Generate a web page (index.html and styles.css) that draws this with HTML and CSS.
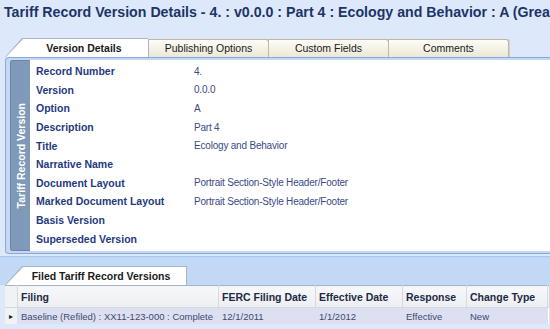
FILE: index.html
```html
<!DOCTYPE html>
<html lang="en">

<head>
    <meta charset="UTF-8" />
    <link rel="stylesheet" href="styles.css">
    <title>Tariff Record Version Details</title>
</head>

<body>
    <h1 class="title">Tariff Record Version Details - 4. : v0.0.0 : Part 4 : Ecology and Behavior : A (Great W</h1>

    <div class="tabs">
        <div class="tab active"><span>Version Details</span></div>
        <div class="tab">Publishing Options</div>
        <div class="tab">Custom Fields</div>
        <div class="tab">Comments</div>
    </div>

    <div class="panel">
        <div class="side"><span>Tariff Record Version</span></div>
        <div class="fields">
            <div class="row"><label>Record Number</label><span>4.</span></div>
            <div class="row"><label>Version</label><span>0.0.0</span></div>
            <div class="row"><label>Option</label><span>A</span></div>
            <div class="row"><label>Description</label><span>Part 4</span></div>
            <div class="row"><label>Title</label><span>Ecology and Behavior</span></div>
            <div class="row"><label>Narrative Name</label><span></span></div>
            <div class="row"><label>Document Layout</label><span>Portrait Section-Style Header/Footer</span></div>
            <div class="row"><label>Marked Document Layout</label><span>Portrait Section-Style Header/Footer</span></div>
            <div class="row"><label>Basis Version</label><span></span></div>
            <div class="row"><label>Superseded Version</label><span></span></div>
        </div>
    </div>

    <div class="band">
        <div class="subtab"><span>Filed Tariff Record Versions</span></div>
    </div>

    <table class="grid">
        <thead>
            <tr>
                <th class="ind"></th>
                <th class="c-filing">Filing</th>
                <th class="c-ferc">FERC Filing Date</th>
                <th class="c-eff">Effective Date</th>
                <th class="c-resp">Response</th>
                <th class="c-type">Change Type</th>
                <th></th>
            </tr>
        </thead>
        <tbody>
            <tr class="sel">
                <td class="ind">&#9656;</td>
                <td>Baseline (Refiled) : XX11-123-000 : Complete</td>
                <td>12/1/2011</td>
                <td>1/1/2012</td>
                <td>Effective</td>
                <td>New</td>
                <td class="blank"></td>
            </tr>
        </tbody>
    </table>
</body>

</html>
```

FILE: styles.css
```css
body {
    margin: 0;
    width: 550px;
    height: 329px;
    overflow: hidden;
    background: #dde9fb;
    font-family: "Liberation Sans", Arial, sans-serif;
}

.title {
    margin: 0;
    padding: 4px 0 0 4px;
    height: 30px;
    box-sizing: border-box;
    font-size: 14.2px;
    font-weight: bold;
    color: #1c3466;
    white-space: nowrap;
}

/* tab strip */
.tabs {
    display: flex;
    height: 21px;
    margin-top: 6px;
    padding-left: 5px;
    align-items: flex-end;
}

.tab {
    width: 121px;
    height: 18px;
    box-sizing: border-box;
    border: 1px solid #bdb8a3;
    border-bottom: none;
    border-radius: 0 3px 0 0;
    background: linear-gradient(#fdfcf6, #ece8d6);
    box-shadow: 1px 0 0 #d6d2c0;
    font-size: 10.5px;
    color: #1a1a1a;
    text-align: center;
    line-height: 17px;
}

.tab + .tab {
    margin-left: -1px;
}

.tab.active {
    width: 144px;
    height: 19px;
    border: none;
    background: #a9b4c6;
    clip-path: polygon(17px 0, 100% 0, 100% 100%, 0 100%);
    padding: 1px 1px 0 1px;
    box-shadow: none;
    position: relative;
    z-index: 1;
}

.tab.active span {
    display: block;
    height: 100%;
    background: #fff;
    clip-path: polygon(17px 0, 100% 0, 100% 100%, 0 100%);
    font-weight: bold;
    padding-left: 14px;
    line-height: 18px;
}

/* details panel */
.panel {
    display: flex;
    margin-left: 5px;
    height: 197px;
    box-sizing: border-box;
    border: 1px solid #86a9de;
    border-right: none;
    border-radius: 4px 0 0 4px;
    background: #c5d8f3;
    padding: 2px 0 2px 4px;
}

.side {
    width: 20px;
    box-sizing: border-box;
    background: #7f9ab8;
    border: 1px solid #6a87aa;
    border-right: none;
    border-radius: 3px 0 0 3px;
    display: flex;
    align-items: center;
    justify-content: center;
}

.side span {
    writing-mode: vertical-rl;
    transform: rotate(180deg);
    color: #fff;
    font-weight: bold;
    font-size: 10.5px;
    white-space: nowrap;
}

.fields {
    flex: 1;
    background: #fff;
    padding: 2px 0 0 6px;
}

.row {
    display: flex;
    height: 18.6px;
    align-items: center;
    font-size: 10.5px;
}

.row label {
    width: 158px;
    font-weight: bold;
    color: #1f3a80;
}

.row span {
    color: #3b4a86;
    font-size: 10px;
    letter-spacing: -0.2px;
}

/* lower band with its tab */
.band {
    margin-top: 2px;
    height: 29px;
    background: #c2d9f6;
    border-top: 1px solid #a9c5ec;
    box-sizing: border-box;
    display: flex;
    align-items: flex-end;
    padding-left: 5px;
}

.subtab {
    width: 182px;
    height: 19px;
    background: #a9b4c6;
    clip-path: polygon(17px 0, 100% 0, 100% 100%, 0 100%);
    padding: 1px 1px 0 1px;
    box-sizing: border-box;
}

.subtab span {
    display: block;
    height: 100%;
    background: #fff;
    clip-path: polygon(17px 0, 100% 0, 100% 100%, 0 100%);
    font-weight: bold;
    font-size: 10.5px;
    color: #1a1a1a;
    text-align: center;
    padding-left: 10px;
    line-height: 18px;
}

/* data grid */
.grid {
    margin-left: 5px;
    width: 545px;
    border-collapse: collapse;
    table-layout: fixed;
    background: #fff;
    border-top: 1px solid #a9b4c6;
}

.grid th,
.grid td {
    padding: 0 0 0 3px;
    text-align: left;
    white-space: nowrap;
    overflow: hidden;
}

.grid th {
    height: 20px;
    padding-top: 1px;
    background: linear-gradient(#f7f8fa, #eceef2);
    border-right: 1px solid #d4d8e0;
    border-bottom: 1px solid #d4d8e0;
    font-size: 10.5px;
    color: #1d2a44;
}

.grid td {
    height: 16px;
    background: #dde0f1;
    font-size: 9.5px;
    color: #3c4a72;
    border-right: 1px solid #dde0f1;
}

.grid td.blank {
    background: #fff;
}

.grid .ind {
    width: 12px;
    padding: 0;
    text-align: center;
    font-size: 8px;
    background: #f1f2f5;
    color: #1a1a1a;
}

.c-filing { width: 197px; }
.c-ferc { width: 93px; }
.c-eff { width: 83px; }
.c-resp { width: 60px; }
.c-type { width: 77px; }
```
